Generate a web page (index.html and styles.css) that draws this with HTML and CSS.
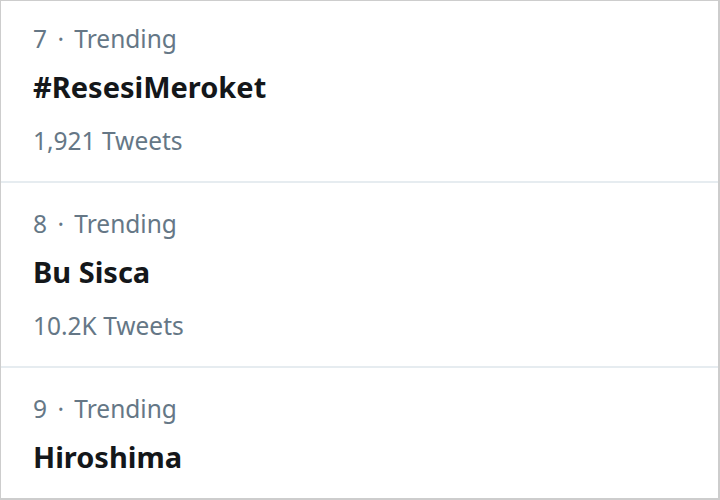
FILE: index.html
```html
<!DOCTYPE html>
<html lang="id">
<head>
<meta charset="utf-8">
<title>Trends</title>
<link rel="stylesheet" href="styles.css">
</head>
<body>
<div class="panel">
  <div class="trend">
    <div class="meta">7 · Trending</div>
    <div class="name">#ResesiMeroket</div>
    <div class="count">1,921 Tweets</div>
  </div>
  <div class="trend">
    <div class="meta">8 · Trending</div>
    <div class="name">Bu Sisca</div>
    <div class="count">10.2K Tweets</div>
  </div>
  <div class="trend">
    <div class="meta">9 · Trending</div>
    <div class="name">Hiroshima</div>
  </div>
</div>
</body>
</html>
```
FILE: styles.css
```css
html, body {
  margin: 0;
  padding: 0;
  background: #ffffff;
}
.panel {
  box-sizing: border-box;
  width: 720px;
  height: 500px;
  overflow: hidden;
  border-style: solid;
  border-color: #cdcdcd;
  border-width: 1px 2px 2px 1px;
  background: #ffffff;
  font-family: "Noto Sans", "Open Sans", sans-serif;
}
.trend {
  display: flex;
  flex-direction: column;
  padding: 25px 0 24px 32px;
  border-bottom: 2px solid #e6ecf0;
}
.trend:first-child {
  padding-top: 22px;
}
.meta, .count {
  font-size: 24.5px;
  line-height: 32px;
  color: #657786;
}
.meta {
  word-spacing: 4px;
}
.name {
  margin-top: 12px;
  font-size: 29px;
  line-height: 40px;
  font-weight: 700;
  color: #14171a;
}
.count {
  margin-top: 18px;
}
```
